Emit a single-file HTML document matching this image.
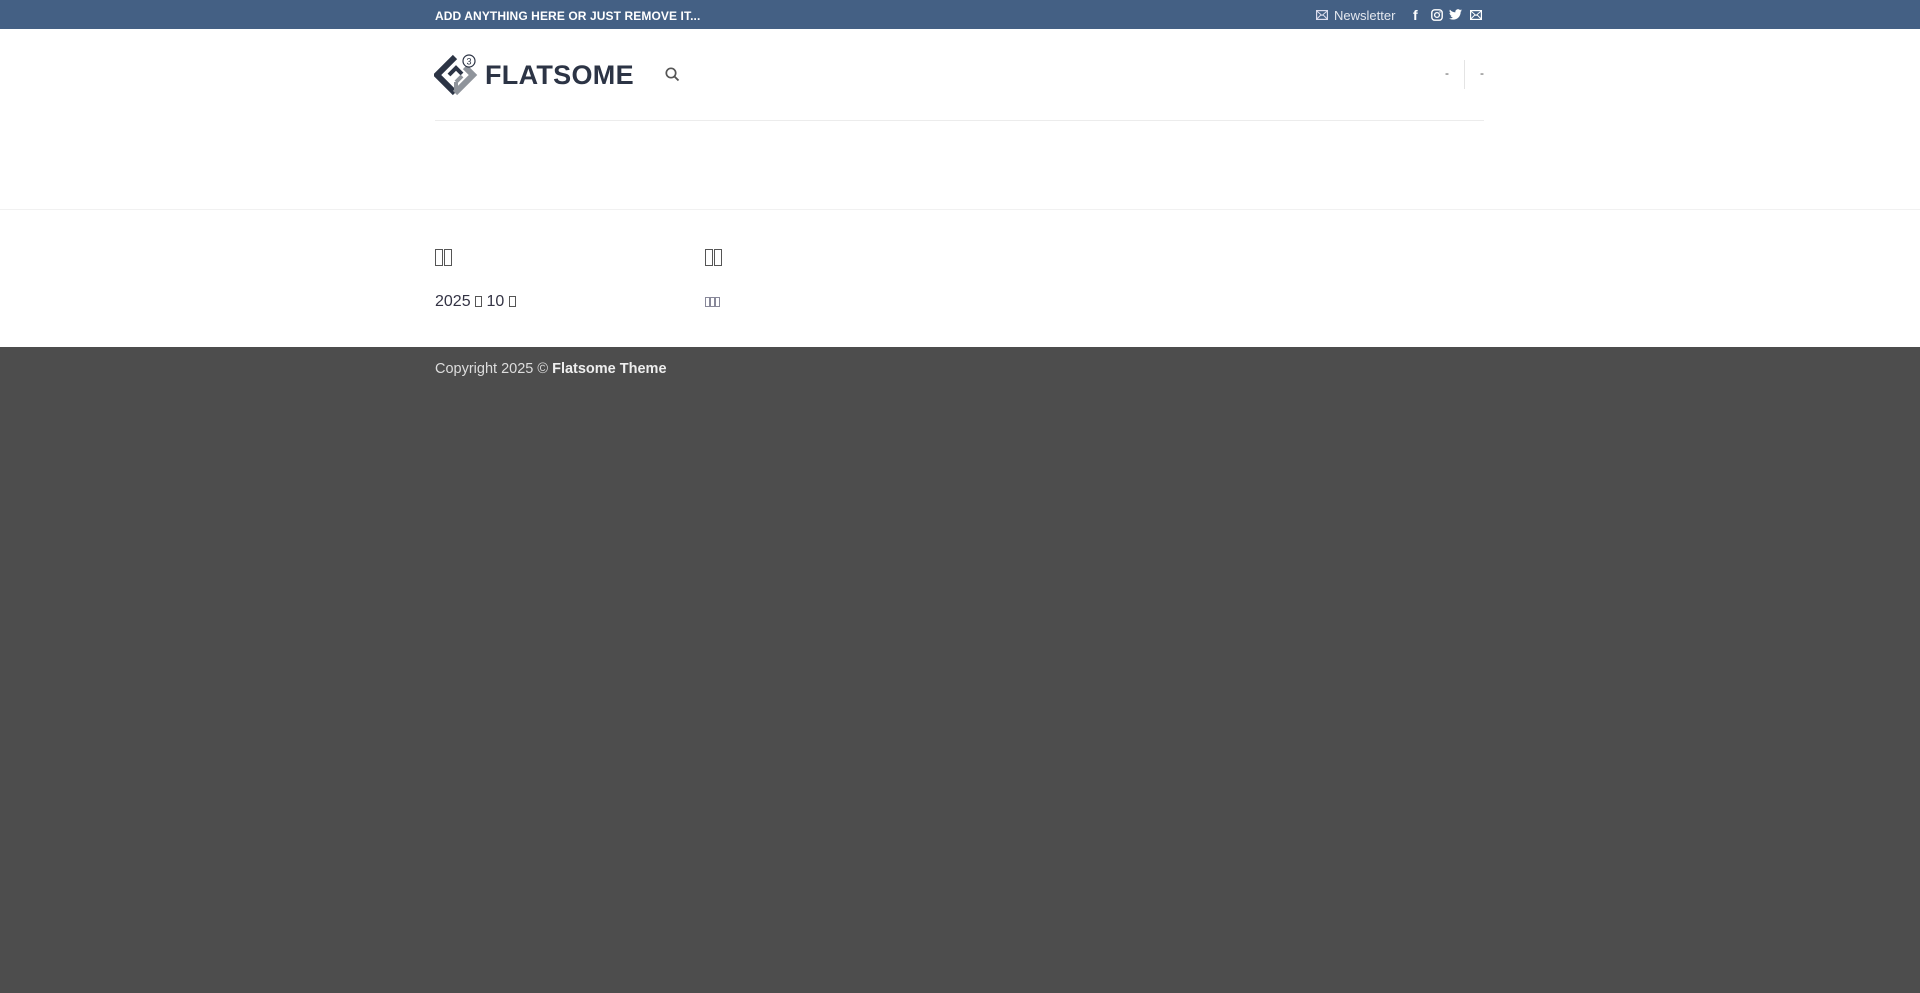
<!DOCTYPE html>
<html><head><meta charset="utf-8"><style>
*{margin:0;padding:0;box-sizing:border-box}
body{width:1920px;height:993px;background:#4d4d4d;font-family:"Liberation Sans",sans-serif;overflow:hidden;position:relative}
.top{position:absolute;left:0;top:0;width:1920px;height:29px;background:#446084}
.top .msg{position:absolute;left:435px;top:9px;color:#fff;font-weight:bold;font-size:12px;letter-spacing:.1px}
.header{position:absolute;left:0;top:29px;width:1920px;height:181px;background:#fff}
.hline{position:absolute;left:435px;width:1049px;height:1px;background:#ececec}
.sep{position:absolute;left:0;top:209px;width:1920px;height:1px;background:#f1f1f1}
.widgets{position:absolute;left:0;top:210px;width:1920px;height:137px;background:#fff}
.tofu{display:inline-block;border:1.3px solid #555;vertical-align:middle}
.t{position:absolute;color:#334;font-size:16px}
.copy{position:absolute;left:435px;top:361px;color:#ddd;font-size:14.5px}
.copy b{color:#eee}
</style></head><body>
<div class="top">
<div class="msg">ADD ANYTHING HERE OR JUST REMOVE IT...</div>
<svg style="position:absolute;left:1316px;top:10px" width="12" height="10" viewBox="0 0 12 10"><rect x=".6" y=".6" width="10.8" height="8.8" fill="none" stroke="#dde" stroke-width="1.2"/><path d="M.8 1l5.2 4.5L11.2 1M.8 9l4-4M11.2 9l-4-4" fill="none" stroke="#dde" stroke-width="1"/></svg>
<div style="position:absolute;left:1334px;top:8px;color:#e4e8ef;font-size:13px">Newsletter</div>
<div style="position:absolute;left:1413px;top:7px;color:#fff;font-size:14px;font-weight:bold">f</div>
<svg style="position:absolute;left:1431px;top:9px" width="12" height="12" viewBox="0 0 12 12"><rect x=".8" y=".8" width="10.4" height="10.4" rx="3" fill="none" stroke="#fff" stroke-width="1.4"/><circle cx="6" cy="6" r="2.4" fill="none" stroke="#fff" stroke-width="1.3"/><circle cx="9" cy="3" r=".7" fill="#fff"/></svg>
<svg style="position:absolute;left:1449px;top:9px" width="13" height="11" viewBox="0 0 24 20"><path d="M24 2.4a10 10 0 0 1-2.8.8A5 5 0 0 0 23.3.5a10 10 0 0 1-3.1 1.200A4.9 4.9 0 0 0 11.8 6 14 14 0 0 1 1.7.9a4.9 4.9 0 0 0 1.5 6.6A4.9 4.9 0 0 1 1 6.9a4.9 4.9 0 0 0 3.9 4.8 5 5 0 0 1-2.2.1 4.9 4.9 0 0 0 4.6 3.4A9.900 9.9 0 0 1 0 17.3 14 14 0 0 0 7.5 19.5c9 0 14-7.5 14-14v-.6A10 10 0 0 0 24 2.4z" fill="#fff"/></svg>
<svg style="position:absolute;left:1470px;top:10px" width="12" height="10" viewBox="0 0 12 10"><rect x=".6" y=".6" width="10.8" height="8.8" fill="none" stroke="#fff" stroke-width="1.2"/><path d="M.8 1l5.2 4.5L11.2 1M.8 9l4-4M11.2 9l-4-4" fill="none" stroke="#fff" stroke-width="1"/></svg>
</div>
<div class="header">
<svg style="position:absolute;left:434px;top:24px" width="46" height="44" viewBox="0 0 46 44">
<path d="M21 4L3 22l18 18" fill="none" stroke="#2c3445" stroke-width="6"/>
<path d="M21 40l18-18-8-8" fill="none" stroke="#8f949b" stroke-width="6"/>
<path d="M15 22l7-7 6 6" fill="none" stroke="#2c3445" stroke-width="4"/>
<path d="M22 29v8M22 29l6-6" fill="none" stroke="#8f949b" stroke-width="4"/>
<circle cx="35" cy="8" r="6" fill="#fff" stroke="#2c3445" stroke-width="1.2"/>
<text x="35" y="11.5" font-size="9" text-anchor="middle" fill="#2c3445" font-family="Liberation Sans">3</text>
</svg>
<div style="position:absolute;left:485px;top:31px;color:#2c3445;font-size:27px;font-weight:bold;letter-spacing:0.3px">FLATSOME</div>
<svg style="position:absolute;left:665px;top:38px" width="15" height="15" viewBox="0 0 15 15"><circle cx="6" cy="6" r="4.7" fill="none" stroke="#555" stroke-width="1.7"/><path d="M9.5 9.5l4 4" stroke="#555" stroke-width="1.9"/></svg>
<div style="position:absolute;left:1445px;top:37px;color:#555;font-size:12px">-</div>
<div style="position:absolute;left:1464px;top:31px;width:1px;height:29px;background:#e4e4e4"></div>
<div style="position:absolute;left:1480px;top:37px;color:#555;font-size:12px">-</div>
<div class="hline" style="top:91px"></div>
</div>
<div class="sep"></div>
<div class="widgets">
<div class="t" style="left:435px;top:39px"><span class="tofu" style="width:8px;height:17px"></span><span class="tofu" style="width:8px;height:17px;margin-left:1px"></span></div>
<div class="t" style="left:705px;top:39px"><span class="tofu" style="width:8px;height:17px"></span><span class="tofu" style="width:8px;height:17px;margin-left:1px"></span></div>
<div class="t" style="left:435px;top:83px">2025 <span class="tofu" style="width:7px;height:11px;border-width:1px"></span> 10 <span class="tofu" style="width:7px;height:11px;border-width:1px"></span></div>
<div class="t" style="left:705px;top:83px"><span class="tofu" style="width:5px;height:10px;border-width:1px;border-color:#889"></span><span class="tofu" style="width:5px;height:10px;border-width:1px;border-color:#889"></span><span class="tofu" style="width:5px;height:10px;border-width:1px;border-color:#889"></span></div>
</div>
<div class="copy">Copyright 2025 © <b>Flatsome Theme</b></div>
</body></html>
